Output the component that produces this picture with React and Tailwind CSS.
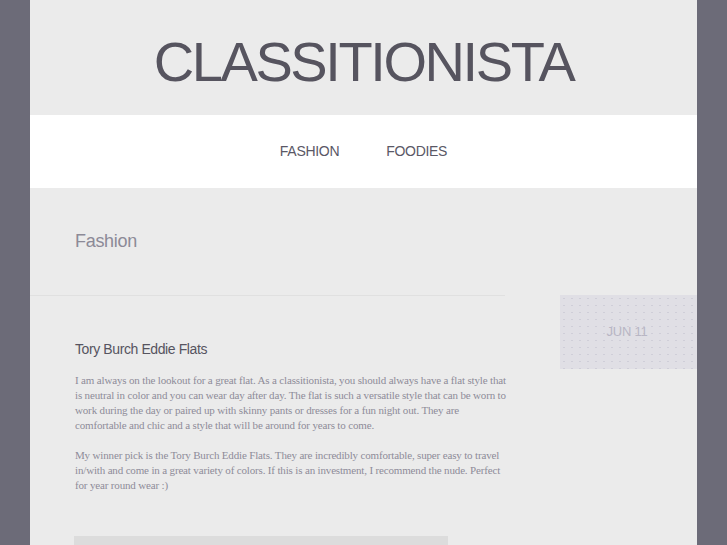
import React from 'react';

const sans = "font-['Liberation_Sans',Arial,sans-serif]";
const serif = "font-['Liberation_Serif','Times_New_Roman',serif]";

function Header() {
  return (
    <>
      <div className="h-[115px] flex items-center justify-center pt-[8px] bg-[#ebebeb]">
        <h1 className={`${sans} text-[56px] leading-none tracking-[-2.4px] text-[#56545f]`}>
          CLASSITIONISTA
        </h1>
      </div>
      <nav className="h-[73px] bg-white flex items-center justify-center gap-[47px]">
        <a className={`${sans} text-[14px] tracking-[-0.3px] text-[#5a5866]`}>FASHION</a>
        <a className={`${sans} text-[14px] tracking-[-0.3px] text-[#5a5866]`}>FOODIES</a>
      </nav>
    </>
  );
}

function Post() {
  return (
    <div className="flex items-start">
      {/* Post body */}
      <article className="w-[475px] border-t border-[#e0e0e0] pl-[45px] pt-[44px]">
        <h2 className={`${sans} text-[14px] leading-[18px] tracking-[-0.4px] text-[#56545f]`}>
          Tory Burch Eddie Flats
        </h2>
        <div className={`${serif} w-[432px] mt-[15px] text-[11px] leading-[15px] tracking-[-0.16px] text-[#8e8b99]`}>
          <p>
            I am always on the lookout for a great flat. As a classitionista, you should always have a flat style that
            is neutral in color and you can wear day after day. The flat is such a versatile style that can be worn to
            work during the day or paired up with skinny pants or dresses for a fun night out. They are comfortable and
            chic and a style that will be around for years to come.
          </p>
          <p className="mt-[15px]">
            My winner pick is the Tory Burch Eddie Flats. They are incredibly comfortable, super easy to travel
            in/with and come in a great variety of colors. If this is an investment, I recommend the nude. Perfect for
            year round wear :)
          </p>
        </div>
        <div className="mt-[43px] ml-[-1px] w-[374px] h-[60px] bg-[#dcdcdc]"></div>
      </article>

      {/* Date badge */}
      <div className="ml-auto w-[137px] h-[74px] flex items-center justify-center bg-[#e0dfe5] bg-[radial-gradient(#cfced8_0.8px,transparent_0.8px)] bg-[length:8px_7px]">
        <span className={`${sans} text-[13px] tracking-[-0.2px] text-[#b8b6c4] mr-[3px]`}>JUN 11</span>
      </div>
    </div>
  );
}

export default function App() {
  return (
    <div className="min-h-screen bg-[#6c6b78] overflow-hidden">
      <div className="mx-auto w-[667px] min-h-screen bg-[#ebebeb]">
        <Header />
        <div className="h-[107px] pl-[45px] pt-[42px]">
          <h3 className={`${sans} text-[18px] leading-[22px] tracking-[-0.3px] text-[#8c8a97]`}>Fashion</h3>
        </div>
        <Post />
      </div>
    </div>
  );
}
